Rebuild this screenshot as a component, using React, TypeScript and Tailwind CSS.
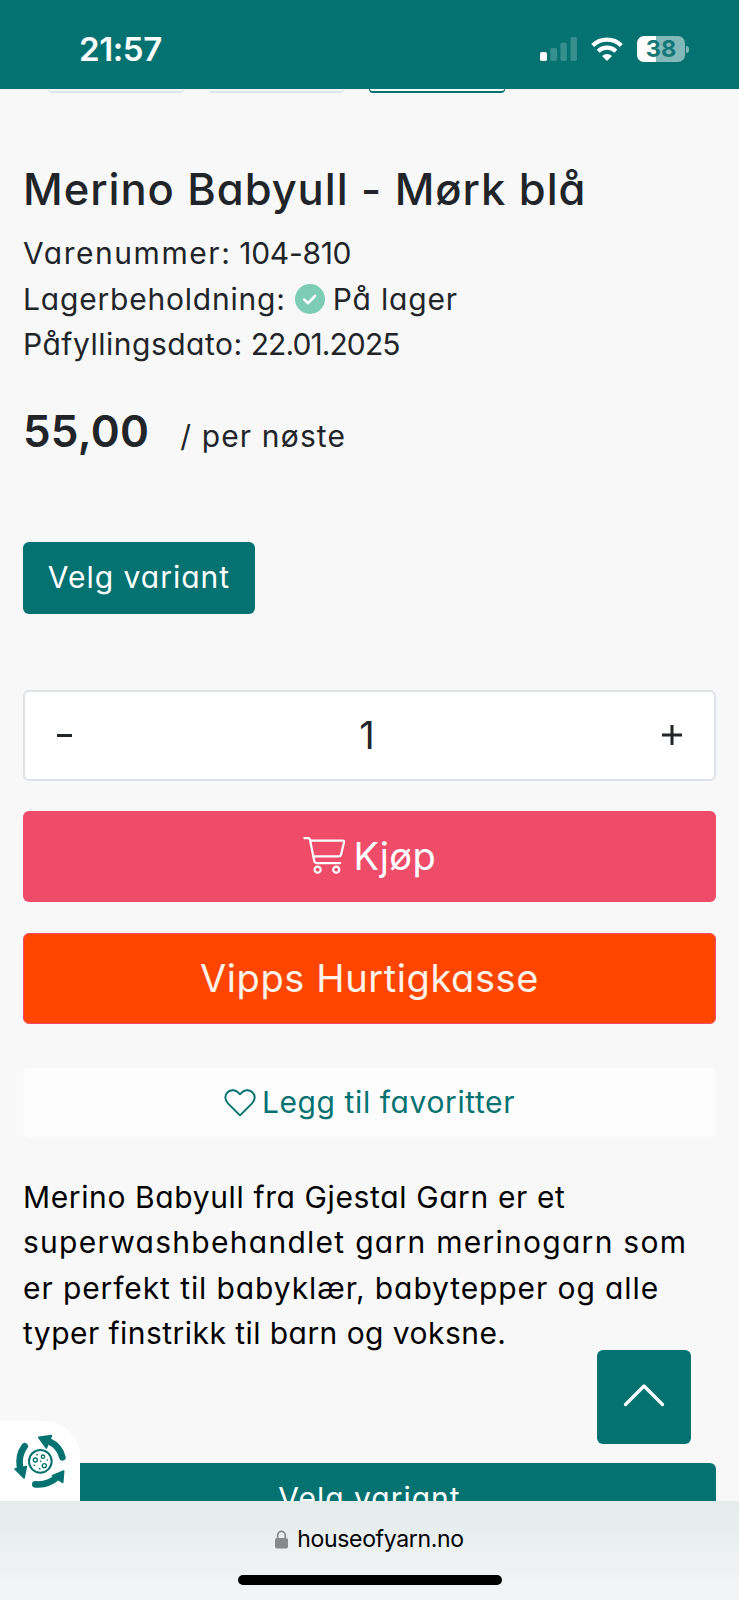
import { ReactNode } from 'react'
import { clsx } from 'clsx'

function StatusBar() {
    return (
        <header className="h-[89px] shrink-0 bg-[#047271] flex items-start justify-between pl-[79px] pr-[50px] text-white">
            <span className="mt-[29px] text-[33px] leading-[40px] font-semibold tracking-[-0.4px]">21:57</span>
            <div className="mt-[36px] flex items-start">
                {/* Signal */}
                <svg width="38" height="26" viewBox="0 0 38 26" fill="#fff">
                    <rect x="0" y="16" width="7" height="9" rx="1.8" />
                    <rect x="10.2" y="12" width="7" height="13" rx="1.8" opacity="0.2" />
                    <rect x="20.4" y="6.5" width="6.5" height="18.5" rx="1.8" opacity="0.2" />
                    <rect x="30.5" y="1" width="6.5" height="24" rx="1.8" opacity="0.2" />
                </svg>
                {/* Wifi */}
                <svg className="ml-[13px]" width="32" height="26" viewBox="0 0 32 26">
                    <g fill="none" stroke="#fff" strokeWidth="4.2">
                        <path d="M1.7 9.5a20.5 20.5 0 0 1 28.6 0" />
                        <path d="M7.2 15.2a12.6 12.6 0 0 1 17.6 0" />
                    </g>
                    <path d="M16 25l-5-5.1a7.2 7.2 0 0 1 10 0z" fill="#fff" />
                </svg>
                {/* Battery */}
                <div className="ml-[14px] h-[26px] w-[48px] rounded-[7px] bg-[linear-gradient(90deg,#fff_39%,#82b9b8_39%)] text-center text-[23.5px] leading-[26px] font-bold text-[#127877]">
                    38
                </div>
                <div className="mt-[10px] ml-[1px] h-[7px] w-[3px] rounded-r-full bg-[#82b9b8]" />
            </div>
        </header>
    )
}

function CheckBadge() {
    return (
        <svg className="ml-[9px] mr-[8px]" width="30" height="30" viewBox="0 0 30 30">
            <circle cx="15" cy="15" r="15" fill="#7dcdb5" />
            <path d="M9.3 15.6l3.8 3.6 7-7.4" fill="none" stroke="#fff" strokeWidth="2.6" strokeLinecap="round" strokeLinejoin="round" />
        </svg>
    )
}

function CartIcon() {
    return (
        <svg width="43" height="40" viewBox="0 0 44 40" fill="none" stroke="#fff" strokeWidth="2.3" strokeLinecap="round" strokeLinejoin="round">
            <path d="M1.3 1.7h4.2q1.2 0 1.6 1.3l4.4 22q.5 2.3 2.8 2.3h23.7" />
            <path d="M7.4 4.2h33.4q1.5 0 1.2 1.5l-3.1 13q-.4 1.8-2.3 1.8H10.5" />
            <circle cx="15" cy="34" r="3.1" />
            <circle cx="34" cy="34" r="3.1" />
        </svg>
    )
}

function HeartIcon() {
    return (
        <svg width="32" height="28" viewBox="0 0 32 28" fill="none" stroke="#047271" strokeWidth="1.9" strokeLinejoin="round">
            <path d="M16 26.3L4.2 14.6C.4 10.8.5 6 3.6 3.2c3.4-3 8.2-2.3 11 .6L16 5.3l1.4-1.5c2.8-2.9 7.6-3.6 11-.6 3.1 2.8 3.2 7.6-.6 11.4z" />
        </svg>
    )
}

function RecycleIcon() {
    return (
        <svg width="80" height="80" viewBox="0 63 240 240">
            <g fill="none" stroke="#047271" strokeWidth="20" strokeLinecap="round">
                <path d="M187 172q-8-33-40-48" />
                <path d="M74 139q-20 27-14 63" />
                <path d="M106 253q36 4 65-21" />
            </g>
            <g fill="#047271" stroke="#047271" strokeWidth="5" strokeLinejoin="round">
                <path d="M116 112l38-5-15 37z" />
                <path d="M45 207l34-7-7 34z" />
                <path d="M191 213l-3 34-31-20z" />
            </g>
            <circle cx="121" cy="184" r="34" fill="none" stroke="#047271" strokeWidth="6" />
            <g fill="none" stroke="#047271" strokeWidth="4">
                <circle cx="106" cy="180" r="6" />
                <circle cx="129" cy="170" r="5" />
                <circle cx="133" cy="197" r="6" />
            </g>
            <g fill="#047271">
                <circle cx="111" cy="164" r="2.5" />
                <circle cx="142" cy="180" r="2.5" />
                <circle cx="122" cy="184" r="2.5" />
                <circle cx="103" cy="196" r="2.5" />
                <circle cx="119" cy="206" r="2.5" />
            </g>
        </svg>
    )
}

function Line({ className, children }: { className?: string; children: ReactNode }) {
    return (
        <div className={clsx('h-[45.5px] flex items-center whitespace-nowrap', className)}>
            {children}
        </div>
    )
}

export default function App() {
    return (
        <div className="h-[1600px] w-[739px] overflow-hidden flex flex-col bg-[#f8f8f8] font-[Inter,sans-serif] text-[#212529]">
            <StatusBar />

            <main className="relative h-[1412px] shrink-0 overflow-hidden [font-feature-settings:'cv11','calt'_0] [font-variant-ligatures:none]">
                {/* Bottom edge of the thumbnail row */}
                <div className="h-[4px] flex gap-[25px] pl-[48px]">
                    <div className="w-[136px] rounded-b-[6px] border-b-2 border-[#dee5e6]" />
                    <div className="w-[135px] rounded-b-[6px] border-b-2 border-[#dee5e6]" />
                    <div className="w-[136px] rounded-b-[6px] border-x border-b-2 border-[#047271] bg-white" />
                </div>

                <div className="px-[23px]">
                    <h1 className="mt-[69px] h-[54px] text-[43.5px] leading-[54px] font-medium whitespace-nowrap tracking-[0.95px]">
                        Merino Babyull - Mørk blå
                    </h1>

                    {/* Product info */}
                    <div className="mt-[15px] text-[30px]">
                        <Line>
                            <span className="tracking-[1.55px]">Varenummer:</span>
                            <span className="ml-[8px] tracking-[-0.3px]">104-810</span>
                        </Line>
                        <Line className="tracking-[0.8px]">
                            <span>Lagerbeholdning:</span>
                            <CheckBadge />
                            <span>På lager</span>
                        </Line>
                        <Line>
                            <span className="tracking-[0.5px]">Påfyllingsdato:</span>
                            <span className="ml-[8px] tracking-[-0.9px]">22.01.2025</span>
                        </Line>
                    </div>

                    <div className="mt-[36px] h-[54px] flex items-baseline whitespace-nowrap">
                        <span className="text-[44px] leading-[54px] font-semibold tracking-[0.2px]">55,00</span>
                        <span className="ml-[31px] text-[30px] tracking-[1.15px]">/ per nøste</span>
                    </div>

                    <button className="mt-[84px] h-[72px] w-[232px] flex items-center justify-center rounded-[6px] bg-[#047271] text-[30px] tracking-[1px] text-white whitespace-nowrap">
                        Velg variant
                    </button>

                    {/* Quantity */}
                    <div className="mt-[76px] h-[91px] w-[693px] flex items-center justify-between rounded-[6px] border-2 border-[#dee2e6] bg-white px-[32px]">
                        <span className="h-[3px] w-[15px] bg-[#212529]" />
                        <span className="text-[38px] leading-none">1</span>
                        <svg width="20" height="20" viewBox="0 0 20 20" stroke="#212529" strokeWidth="3">
                            <path d="M0 10h20M10 0v20" />
                        </svg>
                    </div>

                    <button className="mt-[30px] h-[91px] w-[693px] flex items-center justify-center rounded-[6px] bg-[#ee4c69] text-[38px] tracking-[0.5px] text-white">
                        <CartIcon />
                        <span className="ml-[8px] pt-px">Kjøp</span>
                    </button>

                    <button className="mt-[31px] h-[91px] w-[693px] flex items-center justify-center rounded-[6px] border border-[#ee4c69] bg-[#ff4500] text-[38px] tracking-[0.6px] text-[#fff3ea]">
                        Vipps Hurtigkasse
                    </button>

                    <button className="mt-[44px] h-[70px] w-[693px] flex items-center justify-center rounded-[6px] bg-[#fcfcfc] text-[30px] tracking-[0.6px] text-[#047271]">
                        <HeartIcon />
                        <span className="ml-[6px]">Legg til favoritter</span>
                    </button>

                    {/* Description */}
                    <div className="mt-[37px] text-[30px] text-black">
                        <Line className="tracking-[0.62px]">Merino Babyull fra Gjestal Garn er et</Line>
                        <Line className="tracking-[1.27px]">superwashbehandlet garn merinogarn som</Line>
                        <Line className="tracking-[0.9px]">er perfekt til babyklær, babytepper og alle</Line>
                        <Line className="tracking-[0.45px]">typer finstrikk til barn og voksne.</Line>
                    </div>

                    <button className="mt-[106px] h-[72px] w-[693px] flex items-center justify-center rounded-[6px] bg-[#047271] text-[30px] tracking-[1px] text-white">
                        Velg variant
                    </button>
                </div>

                {/* Back to top */}
                <button className="absolute left-[597px] top-[1261px] h-[94px] w-[94px] flex items-center justify-center rounded-[6px] bg-[#047271] pb-[4px]">
                    <svg width="42" height="24" viewBox="0 0 42 24" fill="none" stroke="#fff" strokeWidth="3.2" strokeLinecap="round" strokeLinejoin="round">
                        <path d="M2.5 21.5L21 3l18.5 18.5" />
                    </svg>
                </button>

                {/* Cookie widget */}
                <div className="absolute left-0 bottom-0 h-[80px] w-[80px] rounded-tr-[36px] bg-white">
                    <RecycleIcon />
                </div>
            </main>

            {/* Browser bar */}
            <footer className="h-[99px] shrink-0 flex flex-col items-center bg-linear-to-b from-[#e3ebeb] to-[#f4f5f6]">
                <div className="mt-[23px] flex items-center text-black">
                    <svg width="13" height="19" viewBox="0 0 13 19">
                        <rect x="0" y="8" width="13" height="10.5" rx="2" fill="#87898b" />
                        <path d="M2.7 9V5.3a3.8 4 0 0 1 7.6 0V9" fill="none" stroke="#87898b" strokeWidth="1.7" />
                    </svg>
                    <span className="ml-[9px] text-[23px] leading-[30px] tracking-[-0.35px]">houseofyarn.no</span>
                </div>
                <div className="mt-[21px] h-[10px] w-[264px] rounded-full bg-black" />
            </footer>
        </div>
    )
}
